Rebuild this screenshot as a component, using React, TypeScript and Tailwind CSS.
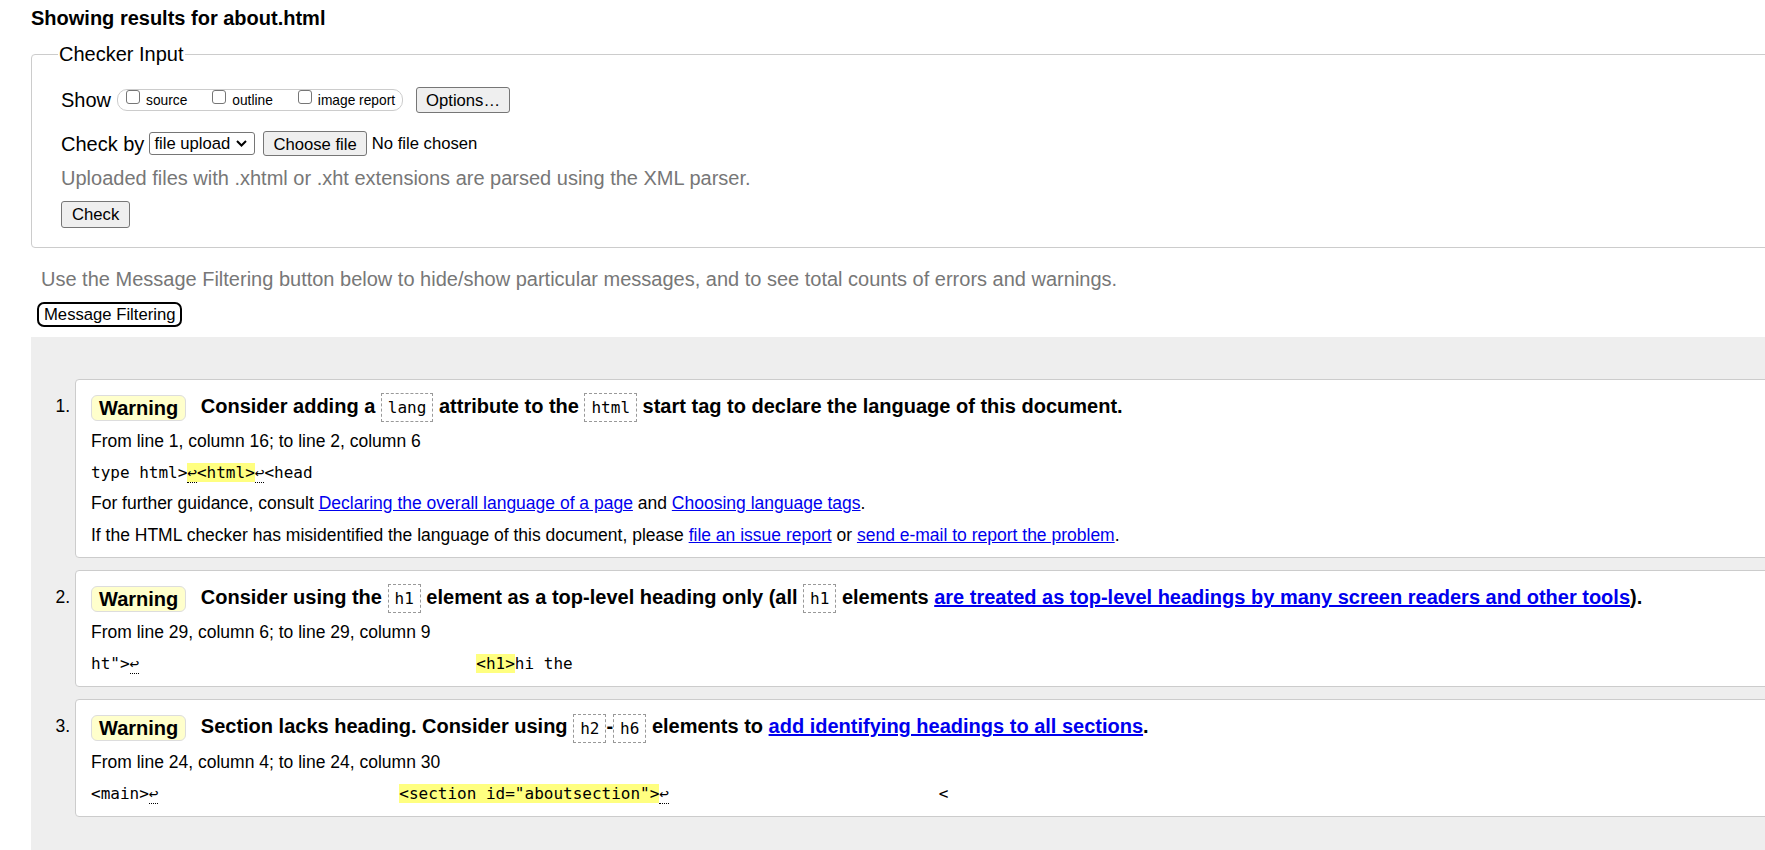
import React from "react";

const sans = "[font-family:'Liberation_Sans',Arial,sans-serif]";
const mono = "[font-family:'DejaVu_Sans_Mono',monospace]";

function Tag({ children }: { children: React.ReactNode }) {
  return (
    <code
      className={`${mono} inline-block align-middle border border-dashed border-[#999] px-[6px] text-[16px] font-normal leading-[27px]`}
    >
      {children}
    </code>
  );
}

function Badge() {
  return (
    <span className="inline-block align-middle mr-[9px] rounded-[6px] border border-[#ddd] bg-[#ffc] px-[7px] leading-[24px]">
      Warning
    </span>
  );
}

function A({ children, bold }: { children: React.ReactNode; bold?: boolean }) {
  return (
    <a href="#" className={`text-[#00e] underline ${bold ? "font-bold" : ""}`}>
      {children}
    </a>
  );
}

// return arrow with the dotted mark under it
function Ret() {
  return <span className="border-b border-dotted border-black">↩</span>;
}

function Hl({ children }: { children: React.ReactNode }) {
  return <span className="bg-[#ffff80]">{children}</span>;
}

function Message({
  n,
  heading,
  location,
  extract,
  extra,
}: {
  n: number;
  heading: React.ReactNode;
  location: string;
  extract: React.ReactNode;
  extra?: React.ReactNode;
}) {
  return (
    <li className="flex">
      <span className="w-[44px] shrink-0 pr-[5px] pt-[11px] text-right text-[17.5px] leading-[32px]">
        {n}.
      </span>
      <div className="flex-1 rounded-[4px] border border-[#ccc] bg-white pl-[15px] pt-[10px] pb-[10px]">
        <p className="whitespace-nowrap text-[20px] font-bold leading-[32px]">
          <Badge /> {heading}
        </p>
        <p className="mt-[7px] text-[17.5px] leading-[24px]">{location}</p>
        <p className={`${mono} mt-[8px] whitespace-pre text-[16px] leading-[24px]`}>
          {extract}
        </p>
        {extra}
      </div>
    </li>
  );
}

export default function App() {
  return (
    <div className={`${sans} h-[850px] w-[1765px] overflow-hidden bg-white text-black`}>
      <div className="w-[1900px] pl-[31px]">
        <h2 className="pt-[6px] text-[20px] font-bold leading-[24px]">
          Showing results for about.html
        </h2>

        {/* Checker input */}
        <fieldset className="mt-[13px] rounded-[4px] border border-[#ccc] pl-[29px] pt-[21px] pb-[19px]">
          <legend className="-ml-[3px] px-[1px] text-[20px] leading-[23px]">
            Checker Input
          </legend>

          <div className="flex h-[26px] items-center">
            <span className="text-[20px]">Show</span>
            <div className="ml-[6px] flex h-[22px] items-start rounded-[10px] border border-[#ccc] pl-[8px] pr-[7px]">
              {["source", "outline", "image report"].map((label, i) => (
                <label
                  key={label}
                  className={`flex items-start ${i > 0 ? "ml-[25px]" : ""}`}
                >
                  <input
                    type="checkbox"
                    className="h-[14px] w-[14px] appearance-none rounded-[3px] border border-[#767676] bg-white"
                  />
                  <span className="ml-[6px] mt-[1px] text-[13.75px] leading-[20px]">
                    {label}
                  </span>
                </label>
              ))}
            </div>
            <button className="ml-[13px] h-[26px] rounded-[3px] border border-[#767676] bg-[#efefef] px-[9px] text-[16.67px]">
              Options…
            </button>
          </div>

          <div className="mt-[18px] flex h-[25px] items-center">
            <span className="text-[20px]">Check by</span>
            <span className="ml-[5px] flex h-[23px] w-[106px] items-center justify-between rounded-[3px] border border-[#767676] bg-white pl-[4px] pr-[7px] text-[16.67px]">
              file upload
              <svg width="11" height="7" viewBox="0 0 11 7" fill="none">
                <path d="M1 1l4.5 4.5L10 1" stroke="#000" strokeWidth="2" />
              </svg>
            </span>
            <button className="ml-[8px] h-[25px] rounded-[3px] border border-[#767676] bg-[#efefef] px-[9px] text-[16.67px]">
              Choose file
            </button>
            <span className="ml-[5px] text-[16.67px]">No file chosen</span>
          </div>

          <p className="mt-[10px] text-[20px] leading-[24px] text-[#777]">
            Uploaded files with .xhtml or .xht extensions are parsed using the XML parser.
          </p>

          <button className="mt-[11px] h-[27px] rounded-[3px] border border-[#767676] bg-[#efefef] px-[10px] text-[16.67px]">
            Check
          </button>
        </fieldset>

        <p className="ml-[10px] mt-[19px] text-[20px] leading-[24px] text-[#777]">
          Use the Message Filtering button below to hide/show particular messages, and to see
          total counts of errors and warnings.
        </p>
        <button className="ml-[6px] mt-[11px] h-[25px] rounded-[7px] border-2 border-black bg-white px-[5px] text-[16.67px] leading-[21px]">
          Message Filtering
        </button>

        {/* Results */}
        <div className="mt-[10px] bg-[#eee] pt-[42px] pb-[80px]">
          <ol className="flex flex-col gap-[12px]">
            <Message
              n={1}
              heading={
                <>
                  Consider adding a <Tag>lang</Tag> attribute to the <Tag>html</Tag> start tag
                  to declare the language of this document.
                </>
              }
              location="From line 1, column 16; to line 2, column 6"
              extract={
                <>
                  type html&gt;
                  <Hl>
                    <Ret />
                    &lt;html&gt;
                  </Hl>
                  <Ret />
                  &lt;head
                </>
              }
              extra={
                <>
                  <p className="mt-[6px] text-[17.5px] leading-[24px]">
                    For further guidance, consult{" "}
                    <A>Declaring the overall language of a page</A> and{" "}
                    <A>Choosing language tags</A>.
                  </p>
                  <p className="mt-[8px] text-[17.5px] leading-[24px]">
                    If the HTML checker has misidentified the language of this document, please{" "}
                    <A>file an issue report</A> or <A>send e-mail to report the problem</A>.
                  </p>
                </>
              }
            />
            <Message
              n={2}
              heading={
                <>
                  Consider using the <Tag>h1</Tag> element as a top-level heading only (all{" "}
                  <Tag>h1</Tag> elements{" "}
                  <A bold>are treated as top-level headings by many screen readers and other tools</A>
                  ).
                </>
              }
              location="From line 29, column 6; to line 29, column 9"
              extract={
                <>
                  ht"&gt;
                  <Ret />
                  {"                                   "}
                  <Hl>&lt;h1&gt;</Hl>hi the
                </>
              }
            />
            <Message
              n={3}
              heading={
                <>
                  Section lacks heading. Consider using <Tag>h2</Tag>-<Tag>h6</Tag> elements to{" "}
                  <A bold>add identifying headings to all sections</A>.
                </>
              }
              location="From line 24, column 4; to line 24, column 30"
              extract={
                <>
                  &lt;main&gt;
                  <Ret />
                  {"                         "}
                  <Hl>&lt;section id="aboutsection"&gt;</Hl>
                  <Ret />
                  {"                            "}&lt;
                </>
              }
            />
          </ol>
        </div>
      </div>
    </div>
  );
}
